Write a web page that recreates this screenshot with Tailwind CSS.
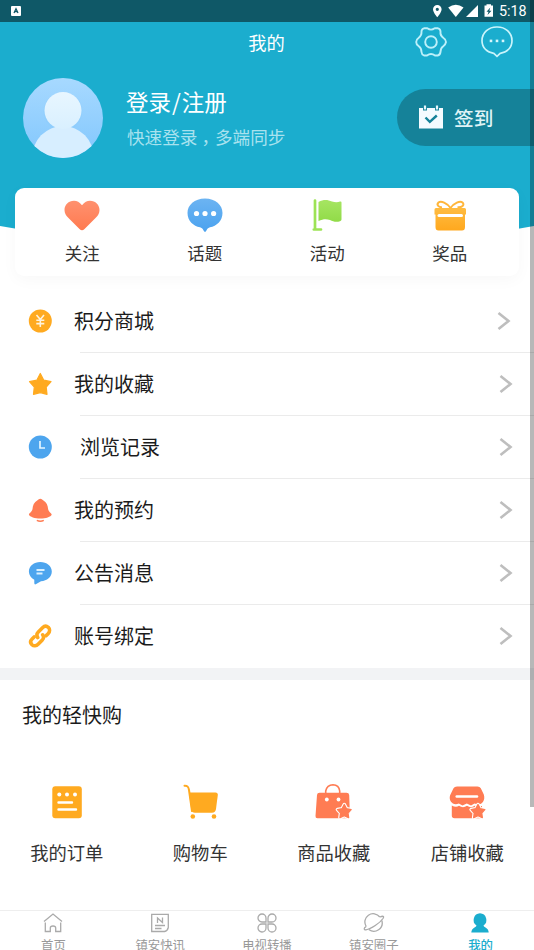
<!DOCTYPE html>
<html lang="zh-CN">
<head>
<meta charset="utf-8">
<title>我的</title>
<script src="https://cdn.jsdelivr.net/npm/@tailwindcss/browser@4"></script>
</head>
<body class="bg-white">
<div class="relative flex h-[950px] w-[534px] flex-col overflow-hidden bg-white font-['Noto_Sans_CJK_SC',sans-serif] text-[#222]">
  <svg class="absolute left-0 top-0" width="534" height="250" viewBox="0 0 534 250"><path d="M0 0H534V226Q267 274 0 226Z" fill="#1badce"/></svg>

  <!-- status bar -->
  <div class="relative flex h-[22px] shrink-0 items-center justify-between bg-[#0f5867] pl-[11px] pr-[7px]">
    <svg width="10" height="10" viewBox="0 0 10 10"><rect width="10" height="10" rx="1" fill="#fff"/><path d="M3 7L5 2.7 7 7M3.700 5.700h2.600" fill="none" stroke="#0f5867" stroke-width="1.300"/></svg>
    <div class="flex items-center">
      <svg width="67" height="14" viewBox="431.500 4 67 14" fill="#fff">
        <path fill-rule="evenodd" d="M436.800 5a4.300 4.300 0 0 0-4.300 4.300c0 3.200 4.300 8 4.300 8s4.300-4.800 4.300-8a4.300 4.300 0 0 0-4.300-4.300zm0 2.700a1.600 1.600 0 1 1 0 3.200 1.600 1.600 0 0 1 0-3.200z"/>
        <path d="M447.700 7.500Q455.300 1.800 463 7.500L455.300 17z"/>
        <path d="M477.500 5V17H465.500z"/>
        <path fill-rule="evenodd" d="M486 4.300h4.500v1.200h2V16.700h-8.500V5.500h2zM489.800 7.500l-3.800 4.300h2l-1 3.200 4-4.300h-2.200z"/>
      </svg>
      <span class="w-[28px] font-['Roboto',sans-serif] text-[14.300px] leading-[22px] whitespace-nowrap text-white">5:18</span>
    </div>
  </div>

  <!-- title bar -->
  <div class="relative grid h-[42px] shrink-0 grid-cols-3 items-center">
    <span></span>
    <h1 class="pr-px pb-[2px] text-center text-[18.300px] leading-[40px] text-white">我的</h1>
    <div class="flex justify-end gap-[34px] pr-[21px] pb-[2px]">
      <svg width="32" height="32" viewBox="0 0 32 32" fill="none" stroke="#bdf0fa" stroke-width="1.900" stroke-linejoin="round"><path d="M9 2.300 12.300 2.300Q16 5 19.700 2.300L23 2.300Q25.500 3 25.500 5.500 25 9.500 28.500 12 31 13.500 31 16 30.500 18.500 28.500 20 25.500 22 25.500 26 25 29 22.700 29.500L20 29.500Q16 26.500 12 29.500L9 29.500Q6.700 28.500 6.500 26 6.500 22 3.500 20 1.200 18.500 1.200 16 1.200 13.500 3.500 12 6.800 9.500 6.500 5.500 6.500 3 9 2.300Z"/><circle cx="16" cy="16" r="5.800"/></svg>
      <svg width="32" height="32" viewBox="0 0 32 32" fill="none" stroke="#c9f4fb" stroke-width="1.700"><path d="M16 1C8 .800 1 6.500 1 14.700 1 21.500 6 26.500 12.800 27.300L16 30.300 19.200 27.300C26 26.500 31 21.500 31 14.700 31 6.500 24 .800 16 1Z"/><g fill="#d5f6fc" stroke="none"><rect x="8.700" y="13.600" width="2.600" height="2.600"/><rect x="14.700" y="13.600" width="2.600" height="2.600"/><rect x="20.700" y="13.600" width="2.600" height="2.600"/></g></svg>
    </div>
  </div>

  <!-- profile -->
  <div class="relative flex h-[124px] shrink-0 pl-[23px]">
    <svg class="mt-[14px] shrink-0" width="80" height="80" viewBox="0 0 80 80">
      <defs><linearGradient id="av" x2="0" y2="1"><stop stop-color="#a7d9ff"/><stop offset="1" stop-color="#82c7fd"/></linearGradient><linearGradient id="hd" x2="0" y2="1"><stop stop-color="#e8f6ff"/><stop offset="1" stop-color="#d9f0ff"/></linearGradient><clipPath id="round"><circle cx="40" cy="40" r="40"/></clipPath></defs>
      <g clip-path="url(#round)"><rect width="80" height="80" fill="url(#av)"/><circle cx="40" cy="33.500" r="19.300" fill="#8ecdfc" opacity=".6"/><ellipse cx="40" cy="80" rx="31" ry="32" fill="#d7eeff"/><circle cx="40" cy="32.500" r="18.500" fill="url(#hd)"/></g>
    </svg>
    <div class="ml-[23px] flex flex-1 flex-col pt-[21px]">
      <div class="text-[22.500px] leading-[32px] text-white">登录<span class="mx-[1px]">/</span>注册</div>
      <div class="mt-[7px] pl-px text-[17.600px] leading-[26px] text-[#a9e2ee]">快速登录<span class="inline-block w-[1em] pl-[4px] -indent-0 whitespace-nowrap">，</span>多端同步</div>
    </div>
    <div class="mt-[25px] flex h-[57px] w-[137px] items-center rounded-l-full bg-[#158299] pl-[22px]">
      <svg class="-mt-[2px]" width="24" height="24" viewBox="0 0 24 24"><path d="M0 3H4V5.500H8V3H16V5.500H20V3H24V23.500H0Z" fill="#f4fbff"/><path d="M6 .500V4.500M18 .500V4.500" stroke="#e4f6fb" stroke-width="2.200"/><path d="M6.500 12.500 10.800 16.800 17.800 10.500" fill="none" stroke="#158299" stroke-width="2.400"/></svg>
      <span class="ml-[11px] text-[19.700px] font-medium text-[#dff3f6]">签到</span>
    </div>
  </div>

  <!-- quick links -->
  <div class="relative mx-[15px] grid h-[88px] shrink-0 grid-cols-4 rounded-[9px] bg-white pl-[6px] pr-[8px] pt-[8px] text-[17.500px] text-[#333] shadow-[0_4px_16px_rgba(0,0,0,0.03)]">
    <div class="flex flex-col items-center">
      <svg width="38" height="38" viewBox="0 0 38 38"><defs><linearGradient id="r" x2="0" y2="1"><stop stop-color="#ff916f"/><stop offset="1" stop-color="#ff7a50"/></linearGradient></defs><path d="M19 9.300C16.500 6 14 4.800 11 4.800 5.500 4.800 1.500 9 1.500 14 1.500 17.500 3 19.500 5 21.500L16.500 33Q19 35.500 21.500 33L33 21.500C35 19.500 36.500 17.500 36.500 14 36.500 9 32.500 4.800 27 4.800 24 4.800 21.500 6 19 9.300Z" fill="url(#r)"/></svg>
      <span class="mt-[6px] leading-[26px]">关注</span>
    </div>
    <div class="flex flex-col items-center">
      <svg width="38" height="38" viewBox="0 0 38 38"><defs><linearGradient id="b" x2="0" y2="1"><stop stop-color="#6cb4f2"/><stop offset="1" stop-color="#4ba2ef"/></linearGradient></defs><path d="M19 2.500C8.500 2.500 1.500 9 1.500 17 1.500 25 7.500 30 14 31.300 16.500 32 17 33.500 18 35.200Q19 36.500 20 35.200C21 33.500 21.500 32 24 31.300 30.500 30 36.500 25 36.500 17 36.500 9 29.500 2.500 19 2.500Z" fill="url(#b)"/><g fill="#fff"><circle cx="10.500" cy="17.500" r="2.600"/><circle cx="19" cy="17.500" r="2.600"/><circle cx="27.600" cy="17.500" r="2.600"/></g></svg>
      <span class="mt-[6px] leading-[26px]">话题</span>
    </div>
    <div class="flex flex-col items-center">
      <svg width="38" height="38" viewBox="0 0 38 38"><defs><linearGradient id="g" x2="0" y2="1"><stop stop-color="#a6e562"/><stop offset="1" stop-color="#91db48"/></linearGradient></defs><path d="M7 4.500V33M5.800 33.500H13" fill="none" stroke="#9de355" stroke-width="2.700" stroke-linecap="round"/><path d="M10.500 6C16 3 20 4 24 5.500 27 6.500 30 6.500 32 5.500Q33.500 5 33.500 6.500V23.500Q33.500 24.800 32 25.300C28 26.500 25 25.500 22 24 18 22.500 15 23 10.500 25Z" fill="url(#g)"/></svg>
      <span class="mt-[6px] leading-[26px]">活动</span>
    </div>
    <div class="flex flex-col items-center">
      <svg width="38" height="38" viewBox="0 0 38 38"><defs><linearGradient id="o" x2="0" y2="1"><stop stop-color="#ffbc42"/><stop offset="1" stop-color="#ffa81e"/></linearGradient></defs><path d="M5 12H33.500Q35 12 35 13.500V18.500H34V31Q34 34.500 31 34.500H7.500Q4.500 34.500 4.500 31V18.500H3.500V13.500Q3.500 12 5 12Z" fill="url(#o)"/><rect x="6.500" y="18" width="25.500" height="3" rx="1.500" fill="#fff"/><path d="M19.500 12C16 7 10 4.500 7.500 6.500 5 9 8 11.500 11 11.200M19.500 12C23 7 29 4.500 31.500 6.500 34 9 31 11.500 26.500 11.200" fill="none" stroke="#ffb63b" stroke-width="2"/></svg>
      <span class="mt-[6px] leading-[26px]">奖品</span>
    </div>
  </div>

  <!-- menu -->
  <div class="mt-[14px] flex shrink-0 flex-col text-[20px] leading-[30px] text-[#1b1b1b]">
    <div class="flex h-[63px] items-center pb-[2px] pl-[28px] pr-[23px]">
      <svg width="24" height="24" viewBox="0 0 24 24"><circle cx="12.300" cy="12" r="11.500" fill="#ffaa20"/><path d="M8.500 6 12.300 10.500 16 6M12.300 10.500V18M8.300 11.300H16.300M8.300 14.600H16.300" fill="none" stroke="#fff3dc" stroke-width="1.600"/></svg>
      <span class="ml-[22px] flex-1">积分商城</span>
      <svg width="14" height="20" viewBox="0 0 14 20"><path d="M1.500 2 11.500 10 1.500 18" fill="none" stroke="#bebebe" stroke-width="2.600"/></svg>
    </div>
    <div class="ml-[80px] h-px bg-[#ebebeb] -mt-px"></div>
    <div class="flex h-[63px] items-center pb-[2px] pl-[28px] pr-[21px]">
      <svg width="24" height="24" viewBox="0 0 24 24"><path d="M12.300 1.500 15.800 8.200 23 9.700 18.200 15 19 22.300 12.300 20.600 5.500 22.300 6.300 15 1.500 9.700 8.800 8.200Z" fill="#ffaa20" stroke="#ffaa20" stroke-width="1.200" stroke-linejoin="round"/></svg>
      <span class="ml-[22px] flex-1">我的收藏</span>
      <svg width="14" height="20" viewBox="0 0 14 20"><path d="M1.500 2 11.500 10 1.500 18" fill="none" stroke="#bebebe" stroke-width="2.600"/></svg>
    </div>
    <div class="ml-[80px] h-px bg-[#ebebeb] -mt-px"></div>
    <div class="flex h-[63px] items-center pb-[2px] pl-[28px] pr-[21px]">
      <svg width="24" height="24" viewBox="0 0 24 24"><circle cx="12.300" cy="12" r="11.500" fill="#4da5ee"/><path d="M12 6V13H17" fill="none" stroke="#e2f5ff" stroke-width="1.700"/></svg>
      <span class="ml-[28px] flex-1">浏览记录</span>
      <svg width="14" height="20" viewBox="0 0 14 20"><path d="M1.500 2 11.500 10 1.500 18" fill="none" stroke="#bebebe" stroke-width="2.600"/></svg>
    </div>
    <div class="ml-[80px] h-px bg-[#ebebeb] -mt-px"></div>
    <div class="flex h-[63px] items-center pb-[2px] pl-[28px] pr-[21px]">
      <svg width="24" height="24" viewBox="0 0 24 24"><path d="M12.300 .700C11 .700 10.500 1.500 9.500 2.200 6 4.200 4.700 7.500 4.500 11 4 14 1.500 14.500 .900 16.500 1.700 19 7 20.500 12.300 20.500S23 19 23.700 16.500C23 14.500 20.600 14 20.100 11 19.900 7.500 18.600 4.200 15.100 2.200 14.100 1.500 13.600 .700 12.300 .700Z" fill="#ff7c53"/><path d="M8.800 22.300Q12.300 24 15.800 22.300" fill="none" stroke="#ff7c53" stroke-width="1.500"/></svg>
      <span class="ml-[22px] flex-1">我的预约</span>
      <svg width="14" height="20" viewBox="0 0 14 20"><path d="M1.500 2 11.500 10 1.500 18" fill="none" stroke="#bebebe" stroke-width="2.600"/></svg>
    </div>
    <div class="ml-[80px] h-px bg-[#ebebeb] -mt-px"></div>
    <div class="flex h-[63px] items-center pb-[2px] pl-[28px] pr-[21px]">
      <svg width="24" height="24" viewBox="0 0 24 24"><path d="M12.300 1C6 1 .900 5 .900 10.500 .900 14 3 17 6.300 18.700V22Q6.300 24.200 8.200 23L13 20.200C19 20 23.800 16 23.800 10.500 23.800 5 18.700 1 12.300 1Z" fill="#4da5ee"/><path d="M8.500 9H16.500M8.500 12.500H14.500" stroke="#d9f0ff" stroke-width="1.800"/></svg>
      <span class="ml-[22px] flex-1">公告消息</span>
      <svg width="14" height="20" viewBox="0 0 14 20"><path d="M1.500 2 11.500 10 1.500 18" fill="none" stroke="#bebebe" stroke-width="2.600"/></svg>
    </div>
    <div class="ml-[80px] h-px bg-[#ebebeb] -mt-px"></div>
    <div class="flex h-[63px] items-center pb-[2px] pl-[28px] pr-[21px]">
      <svg width="24" height="24" viewBox="0 0 24 24" fill="none" stroke="#ffaa20" stroke-width="3.600" stroke-linecap="round"><path d="M9.700 13.500C8.500 11.500 8.700 9.500 10.300 7.900L14.500 3.700C16.300 2 18.700 2 20.300 3.300 22 5 22 7.500 20.300 9.400L18 11.700"/><path d="M14.700 10.800C16 12.700 15.700 14.700 14.100 16.300L10.100 20.300C8.300 22.100 5.700 22.300 4 20.700 2.300 19 2.300 16.700 4.100 14.900L6.100 12.900"/></svg>
      <span class="ml-[22px] flex-1">账号绑定</span>
      <svg width="14" height="20" viewBox="0 0 14 20"><path d="M1.500 2 11.500 10 1.500 18" fill="none" stroke="#bebebe" stroke-width="2.600"/></svg>
    </div>
  </div>

  <div class="h-[12px] shrink-0 bg-[#f2f3f5]"></div>

  <!-- shopping -->
  <h2 class="shrink-0 pl-[22px] pt-[20px] text-[20px] leading-[30px] text-[#1b1b1b]">我的轻快购</h2>
  <div class="grid flex-1 grid-cols-4 pt-[53px] text-[18.300px] text-[#333]">
    <div class="flex flex-col items-center">
      <svg width="38" height="38" viewBox="0 0 38 38"><rect x="4.300" y="3.300" width="29.500" height="32" rx="3" fill="#ffaa20"/><g fill="#fff"><circle cx="11.300" cy="11.400" r="2"/><circle cx="19" cy="11.400" r="2"/><circle cx="27" cy="11.400" r="2"/></g><path d="M10.500 19.500H24M10.500 26.500H28" stroke="#fff" stroke-width="2.400" stroke-linecap="round"/></svg>
      <span class="mt-[17px] leading-[28px]">我的订单</span>
    </div>
    <div class="flex flex-col items-center">
      <svg width="38" height="38" viewBox="0 0 38 38"><path d="M3.500 2.700C6.500 2.500 7.500 3.500 8 7L11 28" fill="none" stroke="#ffaa20" stroke-width="2" stroke-linecap="round"/><path d="M8 9.500H34.500Q37 9.500 36.800 12L35 26Q34.500 29.700 31 29.700H14Q10.700 29.700 10.200 26.500Z" fill="#ffaa20"/><circle cx="11.800" cy="33.500" r="2.300" fill="#ffaa20"/><circle cx="33" cy="33.500" r="2.300" fill="#ffaa20"/></svg>
      <span class="mt-[17px] leading-[28px]">购物车</span>
    </div>
    <div class="flex flex-col items-center">
      <svg width="38" height="38" viewBox="0 0 38 38"><path d="M10.700 10.500V8Q12 1.800 18 1.700 24 1.800 24.700 8V10.500" fill="none" stroke="#ff7c53" stroke-width="1.600"/><path d="M4.500 9.700H31.500Q34 9.700 34.200 12L35 35.300H2.500Q.300 35.300 .500 33L2 12Q2.200 9.700 4.500 9.700Z" fill="#ff7c53"/><circle cx="11.800" cy="16.500" r="1.900" fill="#fff"/><circle cx="23.500" cy="16.500" r="1.900" fill="#fff"/><path id="star" d="M29.300 21.600 31.500 25.800 36.100 26.600 33 30 33.600 34.600 29.300 32.700 25 34.600 25.600 30 22.500 26.600 27.100 25.800Z" fill="#ff7c53" stroke="#fff" stroke-width="3.600" stroke-linejoin="round"/><path d="M29.300 21.600 31.500 25.800 36.100 26.600 33 30 33.600 34.600 29.300 32.700 25 34.600 25.600 30 22.500 26.600 27.100 25.800Z" fill="#ff7c53" stroke="#ff7c53" stroke-width="1.400" stroke-linejoin="round"/></svg>
      <span class="mt-[17px] leading-[28px]">商品收藏</span>
    </div>
    <div class="flex flex-col items-center">
      <svg width="38" height="38" viewBox="0 0 38 38"><path d="M9 3.400H29.500Q31.800 3.400 32.800 5.300L35.800 11.500C37.500 17 34.500 21.500 30 21.500L26.500 20.500 23 22.500 18.800 20.500 14.500 22.500 10.800 20.500C5 23 .500 18 2 12.500L5.500 5.300Q6.500 3.400 9 3.400Z" fill="#ff7c53"/><path d="M8.700 13.500H29" stroke="#fff" stroke-width="2.500" stroke-linecap="round"/><path d="M3.800 22.500Q8 25 11 22.800 15 25.500 19 22.800 23 25.500 26.500 22.800L34 23V35.300H6.500Q3.800 35.300 3.800 32.500Z" fill="#ff7c53"/><g transform="translate(.7 0)"><path d="M29.300 21.600 31.500 25.800 36.100 26.600 33 30 33.600 34.600 29.300 32.700 25 34.600 25.600 30 22.500 26.600 27.100 25.800Z" fill="#ff7c53" stroke="#fff" stroke-width="3.600" stroke-linejoin="round"/><path d="M29.300 21.600 31.500 25.800 36.100 26.600 33 30 33.600 34.600 29.300 32.700 25 34.600 25.600 30 22.500 26.600 27.100 25.800Z" fill="#ff7c53" stroke="#ff7c53" stroke-width="1.400" stroke-linejoin="round"/></g></svg>
      <span class="mt-[17px] leading-[28px]">店铺收藏</span>
    </div>
  </div>

  <!-- tab bar -->
  <nav class="grid h-[40px] shrink-0 grid-cols-5 border-t border-[#eeeeee] bg-white pt-[2px] text-[12.400px] leading-[18px] text-[#999]">
    <div class="flex flex-col items-center"><svg width="20" height="20" viewBox="0 0 20 20" fill="none" stroke="#aaa" stroke-width="1.300"><path d="M1 8.500 10 1 19 8.500"/><path d="M2.300 9.500V18.500H7.300V15Q7.300 13 10 13T12.700 15V18.500H17.700V9.500"/></svg><span class="mt-[3px]">首页</span></div>
    <div class="flex flex-col items-center"><svg width="20" height="20" viewBox="0 0 20 20" fill="none" stroke="#aaa" stroke-width="1.300"><path d="M1.700 1.300H18.300V14.500Q17.500 18 14.500 18.500H1.700Z"/><path d="M7.500 10V5L12.500 9.500V4.500"/><path d="M5 12.500H15M5 15.500H11.500"/></svg><span class="mt-[3px]">镇安快讯</span></div>
    <div class="flex flex-col items-center"><svg width="20" height="20" viewBox="0 0 20 20" fill="none" stroke="#aaa" stroke-width="1.300"><path d="M9 9H5A4 4 0 1 1 9 5ZM11 9V5A4 4 0 1 1 15 9ZM9 11V15A4 4 0 1 1 5 11ZM11 11H15A4 4 0 1 1 11 15Z"/></svg><span class="mt-[3px]">电视转播</span></div>
    <div class="flex flex-col items-center"><svg width="22" height="20" viewBox="0 0 22 20" fill="none" stroke="#aaa" stroke-width="1.300"><path d="M3.200 13.500A8.300 8.300 0 0 1 16.800 4M18.800 7.500A8.300 8.300 0 0 1 5.800 16.500"/><path d="M3.200 13.500C.500 15 .700 17 3 16.800 8 16 17 10 20 5.500 21.500 3 20 2.700 16.800 4"/></svg><span class="mt-[3px]">镇安圈子</span></div>
    <div class="flex flex-col items-center text-[#1badce]"><svg class="-ml-[2px]" width="18" height="20" viewBox="0 0 18 20"><path d="M9 .300A6.700 6.700 0 0 0 5.500 12.500Q5.500 13.500 3.500 14.500 .500 16 .300 19.500H17.700Q17.500 16 14.500 14.500 12.500 13.500 12.500 12.500A6.700 6.700 0 0 0 9 .300Z" fill="#1badce"/></svg><span class="mt-[3px] font-medium">我的</span></div>
  </nav>

  <!-- scroll thumb -->
  <div class="absolute right-0 top-0 h-[807px] w-[4px] bg-black/28"></div>
</div>
</body>
</html>
